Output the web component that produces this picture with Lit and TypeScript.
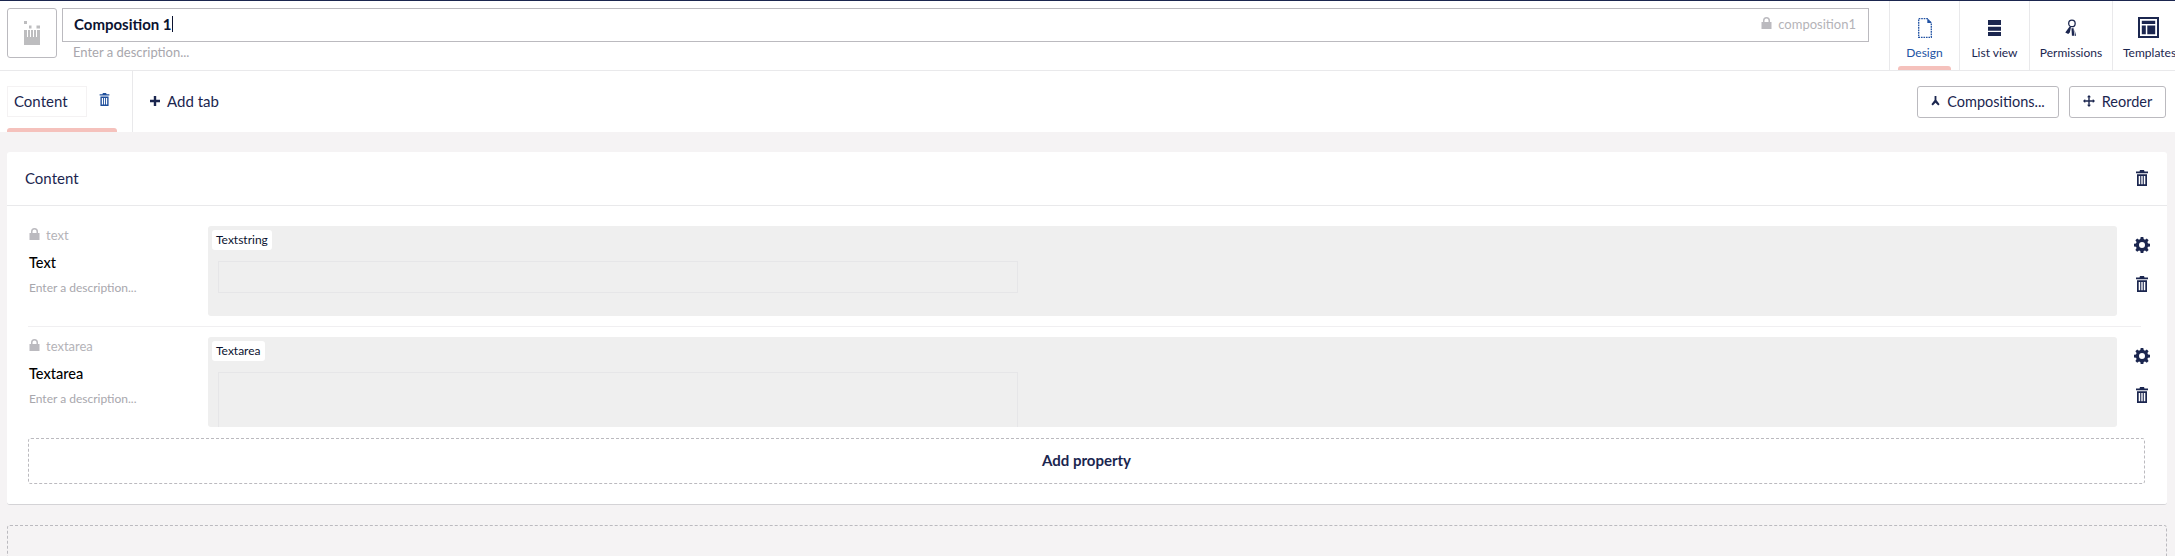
import { LitElement, html, css, svg } from "lit";
import { customElement } from "lit/decorators.js";

const trash = (w = 12, h = 16) => html`<svg class="ico" width="${w}" height="${h}" viewBox="0 0 12 16"><path fill="currentColor" fill-rule="evenodd" d="M4 0h4l.5 1.500H12v1.700H0V1.500h3.500zM1 4.200h10V16H1zM2.700 6v8.300h1.500V6zM5.300 6v8.300h1.400V6zM7.800 6v8.300h1.500V6z"/></svg>`;
const gear = html`<svg class="ico" width="16" height="16" viewBox="0 0 16 16"><path fill="currentColor" fill-rule="evenodd" d="M6.700 0h2.600l.4 2.100 1.300.6 1.800-1.200 1.800 1.800-1.200 1.800.6 1.300 2 .4v2.600l-2 .4-.6 1.300 1.200 1.800-1.800 1.800-1.800-1.200-1.300.6-.4 2H6.700l-.4-2-1.300-.6-1.800 1.200-1.800-1.800 1.200-1.800-.6-1.300-2-.4V6.800l2-.4.6-1.300L1.400 3.300l1.800-1.800L5 2.700l1.300-.6zM8 5a3 3 0 1 0 0 6 3 3 0 0 0 0-6z"/></svg>`;
const lock = html`<svg class="lock" width="11" height="12" viewBox="0 0 10 12"><path fill="currentColor" fill-rule="evenodd" d="M5 0a3.500 3.500 0 0 1 3.500 3.500V5H10v7H0V5h1.500V3.500A3.500 3.500 0 0 1 5 0zm0 1.500a2 2 0 0 0-2 2V5h4V3.500a2 2 0 0 0-2-2z"/></svg>`;

const navIcons = {
  design: svg`<path fill="none" stroke="#2152a3" stroke-width="1.300" stroke-dasharray="1.600 .9" d="M.7.700h8.600l4 4.300v14.300H.7z"/><path fill="#2152a3" d="M9.300 .3 13.700 5H9.300z"/>`,
  list: svg`<path fill="#1b264f" d="M0 2h13v5H0zM0 8.700h13v4H0zM0 14h13v4H0z"/>`,
  perm: svg`<circle cx="7.500" cy="4.500" r="3.500" fill="none" stroke="#1b264f" stroke-width="1.400"/><path fill="#1b264f" d="M5 8l1.500.8-1.300 5.700L3.500 16 .3 14.500zM7 9.800h2.300l.8 8.200H7.500zM10.300 11l1.700 7h-1.300z"/>`,
  tpl: svg`<path fill="#1b264f" fill-rule="evenodd" d="M0 0h21v21H0zM2 2v17h17V2zM3.800 3.800h13.400v3.200H3.800zM3.800 8.500h4v8.700h-4zM9.300 8.500h7.900v8.700H9.300z"/>`,
};

@customElement("app-root")
export class AppRoot extends LitElement {
  static styles = css`
    :host { display: block; height: 556px; overflow: hidden; background: #f5f3f4; color: #1b264f; font-family: Lato, "Open Sans", sans-serif; font-size: 14px; }
    .ico { display: block; color: #1b264f; }
    .lock { display: block; color: #bbbabf; margin-top: -3px; }
    .top { border-top: 1px solid #1b264f; height: 69px; border-bottom: 1px solid #e9e9eb; background: #fff; display: flex; }
    .iconbox { width: 50px; height: 50px; box-sizing: border-box; margin: 7px 5px 0 7px; border: 1px solid #bbbabf; border-radius: 3px; display: flex; align-items: center; justify-content: center; flex: none; }
    .name { width: 1807px; flex: none; margin-top: 7px; }
    .input { height: 34px; box-sizing: border-box; border: 1px solid #bbbabf; display: flex; align-items: center; padding: 0 12px 2px 11px; }
    .title { font-weight: 700; font-size: 15px; color: #0b1330; }
    .caret { display: inline-block; width: 1px; height: 16px; background: #0b1330; }
    .alias { margin-left: auto; display: flex; align-items: center; gap: 6px; color: #b4b3b8; font-size: 13px; }
    .alias .lock { margin-top: -2px; }
    .desc { color: #a8a7ad; font-size: 13px; margin: 3px 0 0 11px; line-height: 15px; }
    .nav { display: flex; margin-left: 20px; flex: none; }
    .nav a { border-left: 1px solid #e9e9eb; width: 70px; display: flex; flex-direction: column; align-items: center; position: relative; font-size: 12px; padding-top: 17px; height: 69px; box-sizing: border-box; white-space: nowrap; color: #1b264f; flex: none; }
    .nav a svg { height: 20px; margin-bottom: 7px; display: block; }
    .nav a.on { color: #2152a3; }
    .nav a.perm { width: 83px; }
    .nav a.tpl { width: 70px; align-items: flex-start; padding-left: 10px; }
    .nav a.tpl svg { margin: -1px 0 7px 15px; height: 21px; }
    .bar { position: absolute; background: #f5c1bc; border-radius: 3px 3px 0 0; }
    .nav .bar { left: 8px; right: 8px; bottom: 0; height: 4px; }
    .tabs { height: 61px; background: #fff; display: flex; }
    .tabwrap { width: 125px; border-right: 1px solid #e9e9eb; position: relative; height: 61px; padding-left: 7px; display: flex; align-items: flex-start; flex: none; }
    .tabname { margin-top: 15px; width: 80px; height: 31px; box-sizing: border-box; border: 1px solid #f4f2f3; display: flex; align-items: center; padding: 0 0 2px 6px; font-size: 15px; }
    .tabtrash { margin: 22px 0 0 12px; }
    .tabtrash .ico { color: #1f4f9c; }
    .tabwrap .bar { left: 7px; width: 110px; bottom: 0; height: 4px; }
    .addtab { margin-left: 17px; display: flex; align-items: center; gap: 7px; font-size: 15px; height: 61px; box-sizing: border-box; padding-bottom: 2px; }
    .btns { margin-left: auto; display: flex; gap: 10px; padding: 15px 9px 0 0; }
    .btn { height: 32px; box-sizing: border-box; border: 1px solid #bbbabf; border-radius: 3px; display: flex; align-items: center; justify-content: center; gap: 7px; font-size: 14.500px; background: #fff; padding-bottom: 2px; }
    .btn.c { width: 142px; }
    .btn.r { width: 97px; }
    .main { padding: 20px 8px 0 7px; }
    .card { background: #fff; border-radius: 3px; border-bottom: 1px solid #d4d3d6; }
    .chead { height: 53px; box-sizing: content-box; border-bottom: 1px solid #e9e9eb; display: flex; align-items: center; justify-content: space-between; padding: 0 19px 0 18px; font-size: 15px; }
    .chead span { margin-bottom: 2px; }
    .chead .ico { margin-bottom: 2px; }
    .rows { padding: 20px 21px 20px 21px; }
    .row { display: grid; grid-template-columns: 180px 1909px 1fr; height: 90px; }
    .sep { height: 1px; background: #f0eff1; width: 2113px; margin: 10px 0; }
    .meta { padding-left: 1px; }
    .am { display: flex; align-items: center; gap: 6px; font-size: 13px; color: #b4b3b8; height: 18px; }
    .lbl { font-weight: 500; font-size: 14.500px; color: #000; margin-top: 10px; line-height: 18px; }
    .dsc { color: #a8a7ad; font-size: 12px; margin-top: 8px; line-height: 15px; }
    .editor { background: #efefef; border-radius: 3px; overflow: hidden; height: 90px; padding: 4px 0 0 4px; box-sizing: border-box; }
    .chip { display: inline-block; background: #fff; border-radius: 3px; height: 20px; line-height: 20px; padding: 0 4px; font-size: 12px; color: #0b1330; vertical-align: top; }
    .fake { margin: 11px 0 0 6px; width: 800px; box-sizing: border-box; border: 1px solid #e6e6e8; height: 32px; }
    .fake.t { height: 70px; }
    .acts { display: flex; flex-direction: column; align-items: center; padding-left: 1px; width: 48px; }
    .acts .g { margin-top: 11px; }
    .acts .t { margin-top: 23px; }
    .addprop { margin-top: 11px; height: 46px; box-sizing: border-box; width: 2117px; border: 1px dashed #bbbabf; border-radius: 3px; display: flex; align-items: center; justify-content: center; font-weight: 700; font-size: 15px; padding-bottom: 2px; }
    .dashed { margin-top: 20px; height: 60px; border: 1px dashed #bbbabf; border-radius: 3px; }
  `;

  private row(alias: string, label: string, editor: string, tall: boolean) {
    return html`<div class="row">
      <div class="meta">
        <div class="am">${lock}<span>${alias}</span></div>
        <div class="lbl">${label}</div>
        <div class="dsc">Enter a description...</div>
      </div>
      <div class="editor"><span class="chip">${editor}</span><div class="fake ${tall ? "t" : ""}"></div></div>
      <div class="acts"><div class="g">${gear}</div><div class="t">${trash()}</div></div>
    </div>`;
  }

  render() {
    return html`
      <div class="top">
        <div class="iconbox"><svg width="16" height="24" viewBox="0 0 16 24"><path fill="#bdbdbf" d="M0 0h3v3H0zM5 4.500h2.500v3H5zM12.500 4.500H16v3h-3.500zM0 9h3v15H0zM4 9h2v15H4zM7 9h2v15H7zM10 9h2v15h-2zM13 9h3v15h-3zM0 16h16v8H0z"/></svg></div>
        <div class="name">
          <div class="input"><span class="title">Composition 1</span><span class="caret"></span>
            <span class="alias">${lock}<span>composition1</span></span></div>
          <div class="desc">Enter a description...</div>
        </div>
        <div class="nav">
          <a class="on"><svg width="14" height="20" viewBox="0 0 14 20">${navIcons.design}</svg>Design<span class="bar"></span></a>
          <a><svg width="13" height="20" viewBox="0 0 13 20">${navIcons.list}</svg>List view</a>
          <a class="perm"><svg width="12" height="20" viewBox="0 0 13 19">${navIcons.perm}</svg>Permissions</a>
          <a class="tpl"><svg width="21" height="21" viewBox="0 0 21 21">${navIcons.tpl}</svg>Templates</a>
        </div>
      </div>
      <div class="tabs">
        <div class="tabwrap">
          <div class="tabname">Content</div>
          <div class="tabtrash">${trash(11, 13)}</div>
          <span class="bar"></span>
        </div>
        <div class="addtab"><svg width="10" height="10" viewBox="0 0 10 10"><path fill="#1b264f" d="M3.800 0h2.400v3.800H10v2.400H6.200V10H3.800V6.200H0V3.800h3.800z"/></svg>Add tab</div>
        <div class="btns">
          <div class="btn c"><svg width="9" height="10" viewBox="0 0 9 11"><path fill="#1b264f" d="M3.500 0h2v4.500l3.500 4.500-1.500 1.500-3-3-3 3L0 9l3.500-4.500z"/></svg>Compositions...</div>
          <div class="btn r"><svg width="12" height="12" viewBox="0 0 12 12"><path fill="#1b264f" d="M6 0l2 2.200H6.700v3.100h3.100V4L12 6 9.800 8V6.700H6.700v3.100H8L6 12 4 9.800h1.300V6.700H2.200V8L0 6l2.200-2v1.300h3.100V2.200H4z"/></svg>Reorder</div>
        </div>
      </div>
      <div class="main">
        <div class="card">
          <div class="chead"><span>Content</span>${trash()}</div>
          <div class="rows">
            ${this.row("text", "Text", "Textstring", false)}
            <div class="sep"></div>
            ${this.row("textarea", "Textarea", "Textarea", true)}
            <div class="addprop">Add property</div>
          </div>
        </div>
        <div class="dashed"></div>
      </div>
    `;
  }
}
